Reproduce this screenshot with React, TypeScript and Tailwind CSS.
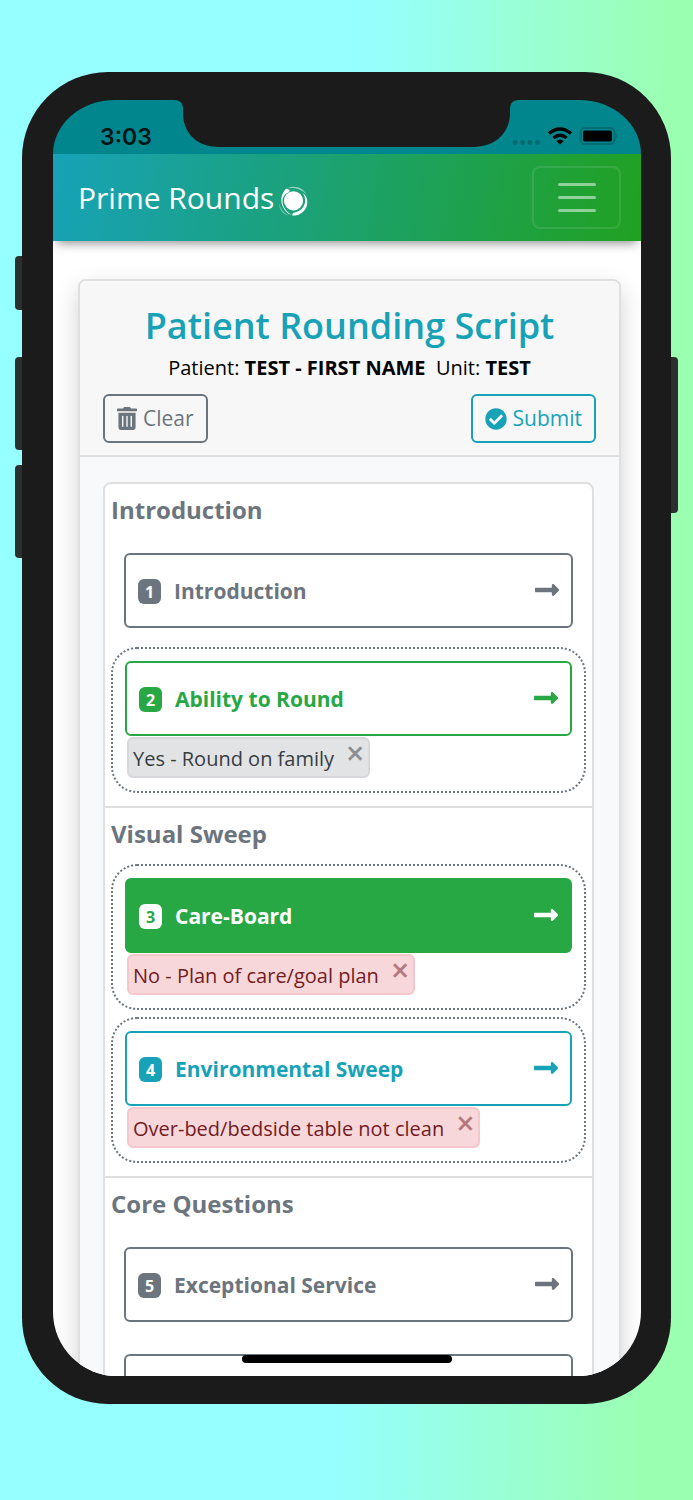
import React from "react";
import { FaCheckCircle, FaLongArrowAltRight, FaTrashAlt } from "react-icons/fa";

type Tone = "gray" | "green" | "greenSolid" | "teal";
type Note = { text: string; tone: "gray" | "red" };
type Item = { n: number; label: string; tone: Tone; note?: Note };

const box: Record<Tone, string> = {
  gray: "border-[#6c757d] bg-white text-[#6c757d]",
  green: "border-[#28a745] bg-white text-[#28a745]",
  greenSolid: "border-[#28a745] bg-[#28a745] text-white",
  teal: "border-[#17a2b8] bg-white text-[#17a2b8]",
};
const badge: Record<Tone, string> = {
  gray: "bg-[#6c757d] text-white",
  green: "bg-[#28a745] text-white",
  greenSolid: "bg-white text-[#28a745]",
  teal: "bg-[#17a2b8] text-white",
};
const noteTone = {
  gray: "border-[#d6d8db] bg-[#e2e3e5] text-[#383d41]",
  red: "border-[#f5c6cb] bg-[#f8d7da] text-[#721c24]",
};

const sections: { title: string; items: Item[] }[] = [
  {
    title: "Introduction",
    items: [
      { n: 1, label: "Introduction", tone: "gray" },
      { n: 2, label: "Ability to Round", tone: "green", note: { text: "Yes - Round on family", tone: "gray" } },
    ],
  },
  {
    title: "Visual Sweep",
    items: [
      { n: 3, label: "Care-Board", tone: "greenSolid", note: { text: "No - Plan of care/goal plan", tone: "red" } },
      { n: 4, label: "Environmental Sweep", tone: "teal", note: { text: "Over-bed/bedside table not clean", tone: "red" } },
    ],
  },
  {
    title: "Core Questions",
    items: [
      { n: 5, label: "Exceptional Service", tone: "gray" },
      { n: 6, label: "", tone: "gray" },
    ],
  },
];

function ItemButton({ item }: { item: Item }) {
  return (
    <button
      type="button"
      className={`flex h-[75px] w-full items-center rounded-md border-2 px-3 pt-0.5 text-left ${box[item.tone]}`}
    >
      {item.label && (
        <>
          <span className={`flex h-[25px] w-[23px] items-center justify-center rounded-md text-base font-bold ${badge[item.tone]}`}>
            {item.n}
          </span>
          <span className="ml-[13px] flex-1 text-[21px] font-bold">{item.label}</span>
          <FaLongArrowAltRight className="mb-1 h-7 w-6" />
        </>
      )}
    </button>
  );
}

function ItemRow({ item }: { item: Item }) {
  if (!item.note) {
    return (
      <li className="px-[13px] pt-[13px] pb-[19px]">
        <ItemButton item={item} />
      </li>
    );
  }
  return (
    <li className="mb-[7px] rounded-[26px] border-2 border-dotted border-[#6c757d] p-3 pb-[13px]">
      <ItemButton item={item} />
      <div className={`ml-0.5 mt-px inline-flex h-[41px] items-start rounded-md border-2 pl-1 pr-1 align-top ${noteTone[item.note.tone]}`}>
        <span className="text-[20px] leading-[39px]">{item.note.text}</span>
        <button type="button" aria-label="Remove" className="ml-3 text-[32px] leading-[27px] font-semibold opacity-50">
          ×
        </button>
      </div>
    </li>
  );
}

function Swirl() {
  return (
    <svg viewBox="0 0 32 32" className="mt-1.5 h-8 w-8" fill="#fff" aria-hidden="true">
      <circle cx="15.500" cy="15.800" r="9.600" />
      <path d="M8.500 3.500C3 7.500 1.500 17 6 24C8.500 27.500 11 29.500 14 30C8.500 27 4.300 22 4.500 15.500C4.800 11.500 7.500 8.500 11 7L12 5Z" />
      <path d="M24.500 8C30 15 27 26 15 28L14 30.300C21.500 32 29.800 25 29.300 16.500C29 12.500 27.500 9.500 24.500 8Z" />
      <path d="M10 3C16 0 25 2.500 28.500 9.500C24 4 17 2.500 10 3Z" opacity=".55" />
      <path d="M1.500 18C2 24 6 28.500 11 30.500C5 29.500 .5 24 1.500 18Z" opacity=".45" />
    </svg>
  );
}

function StatusBar() {
  return (
    <div className="relative flex h-[54px] shrink-0 items-center justify-between rounded-t-[62px_54px] bg-[#00868c] pl-[47px] pr-[23px] pt-5">
      <svg viewBox="0 0 330 48" className="absolute left-1/2 top-0 h-12 w-[330px] -translate-x-1/2 overflow-visible" aria-hidden="true">
        <path d="M-8 0C-2 0 1 3 1 9V13C1 33 15 47 37 47H291C313 47 328 33 328 13V9C328 3 331 0 337 0V-2H-8Z" fill="#1b1b1b" />
      </svg>
      <time className="font-['Inter',sans-serif] text-[23px] font-semibold text-black/85">3:03</time>
      <StatusIcons />
    </div>
  );
}

function StatusIcons() {
  return (
    <svg viewBox="0 0 106 22" className="h-[22px] w-[106px]" aria-hidden="true">
      <g fill="#036b71">
        <circle cx="3" cy="16.500" r="2.400" /><circle cx="10.500" cy="16.500" r="2.400" />
        <circle cx="18" cy="16.500" r="2.400" /><circle cx="25.500" cy="16.500" r="2.400" />
      </g>
      <g fill="none" stroke="#000" strokeWidth="3.200">
        <path d="M37 7.500Q48-1.500 59 7.500" /><path d="M41.500 12Q48 6.500 54.500 12" />
      </g>
      <path d="M44.300 15Q48 12 51.700 15L48 18.500Z" />
      <rect x="68.500" y="2" width="34" height="16" rx="4.500" fill="none" stroke="#036b71" strokeWidth="2" />
      <rect x="71" y="4.500" width="29" height="11" rx="2" />
      <path d="M104.500 7.500Q107.500 10 104.500 12.500Z" fill="#036b71" />
    </svg>
  );
}

export default function App() {
  return (
    <div className="flex h-screen flex-col bg-[linear-gradient(91deg,#96ffff_50%,#99ffd4_74%,#9bffb2_93%)] px-[22px] pt-[72px] pb-24 font-['Open_Sans','Noto_Sans',sans-serif]">
      <div className="relative flex min-h-0 flex-1 flex-col">
        <i className="absolute -left-[7px] top-[184px] h-[54px] w-5 rounded bg-[#2d2f2e]" />
        <i className="absolute -left-[7px] top-[285px] h-[93px] w-5 rounded bg-[#2d2f2e]" />
        <i className="absolute -left-[7px] top-[393px] h-[93px] w-5 rounded bg-[#2d2f2e]" />
        <i className="absolute -right-[7px] top-[285px] h-[156px] w-5 rounded bg-[#2d2f2e]" />
        <div className="relative flex min-h-0 flex-1 flex-col rounded-[86px] bg-[#1b1b1b] py-7 pl-[31px] pr-[30px]">
          <StatusBar />
          <div className="relative flex min-h-0 flex-1 flex-col overflow-hidden rounded-b-[64px] bg-white">
            <nav className="z-10 flex h-[87px] shrink-0 items-center justify-between bg-[linear-gradient(100deg,#17a2b8,#21a121)] pl-[25px] pr-5 shadow-[0_6px_10px_-4px_rgba(0,0,0,0.45)]">
              <a href="#" className="flex items-center gap-1 text-[30px] text-white">
                Prime Rounds
                <Swirl />
              </a>
              <button
                type="button"
                aria-label="Menu"
                className="flex h-[63px] w-[89px] flex-col items-center justify-center gap-[10px] rounded-lg border-2 border-white/10"
              >
                <span className="h-[3px] w-[38px] rounded bg-white/50" />
                <span className="h-[3px] w-[38px] rounded bg-white/50" />
                <span className="h-[3px] w-[38px] rounded bg-white/50" />
              </button>
            </nav>
            <main className="pt-[38px] pl-[25px] pr-5">
              <section className="rounded-lg border-2 border-[#dfdfdf] bg-[#f8f9fb] shadow-[0_10px_24px_rgba(0,0,0,0.18)]">
                <header className="rounded-t-md border-b-2 border-[#dfdfdf] bg-[#f7f7f7] px-[23px] pb-3 pt-4 text-center">
                  <h1 className="text-[36px] leading-[57px] font-semibold text-[#17a2b8]">Patient Rounding Script</h1>
                  <p className="text-[20px] leading-7 text-black">
                    Patient: <b>TEST - FIRST NAME</b>&nbsp; Unit: <b>TEST</b>
                  </p>
                  <div className="mt-3 flex justify-between text-[21px]">
                    <button type="button" className="flex h-[49px] items-center gap-1.5 rounded-md border-2 border-[#6c757d] px-3 text-[#6c757d]">
                      <FaTrashAlt className="h-[23px] w-5" />
                      Clear
                    </button>
                    <button type="button" className="flex h-[49px] items-center gap-1.5 rounded-md border-2 border-[#17a2b8] px-3 text-[#17a2b8]">
                      <FaCheckCircle className="size-[22px]" />
                      Submit
                    </button>
                  </div>
                </header>
                <div className="pt-[25px] pl-[23px] pr-[25px]">
                  <div className="rounded-lg border-2 border-[#dfdfdf] bg-white">
                    {sections.map((s) => (
                      <section key={s.title} className="border-b-2 border-[#dfdfdf] px-1.5 pb-1.5">
                        <h2 className="mb-[5px] text-[24px] leading-[51px] font-bold text-[#6c757d]">{s.title}</h2>
                        <ul>
                          {s.items.map((i) => (
                            <ItemRow key={i.n} item={i} />
                          ))}
                        </ul>
                      </section>
                    ))}
                  </div>
                </div>
              </section>
            </main>
            <div className="absolute bottom-[13px] left-1/2 z-10 h-2 w-[210px] -translate-x-1/2 rounded bg-black" />
          </div>
        </div>
      </div>
    </div>
  );
}
